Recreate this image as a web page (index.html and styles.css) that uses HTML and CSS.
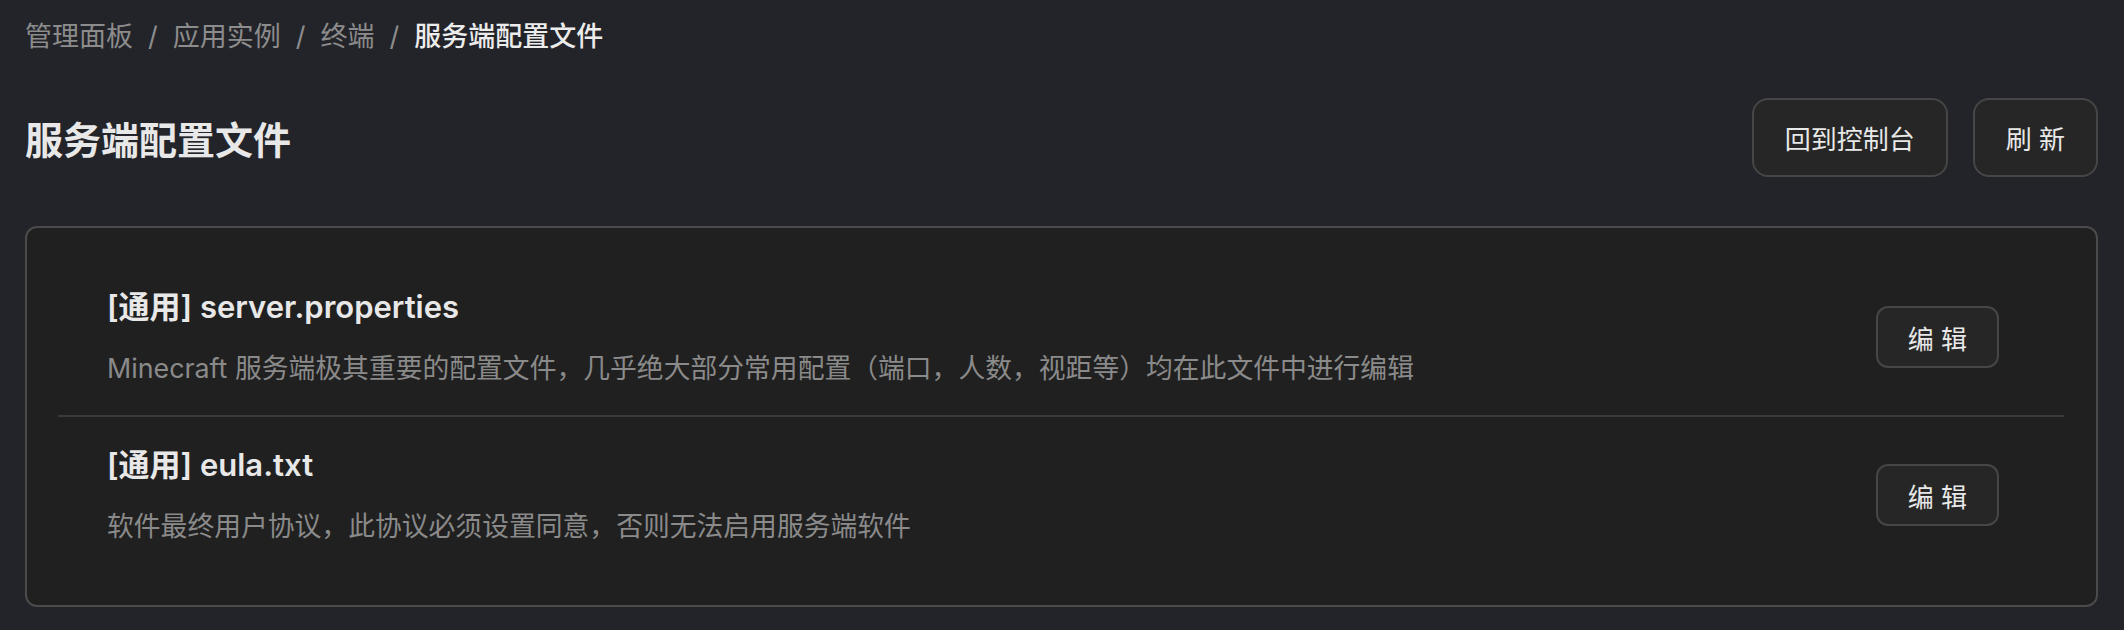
FILE: index.html
```html
<!DOCTYPE html>
<html lang="zh-CN">
<head>
    <meta charset="UTF-8">
    <meta name="viewport" content="width=device-width, initial-scale=1.0">
    <title>服务端配置文件</title>
    <link rel="stylesheet" href="styles.css">
</head>
<body>

    <!-- Breadcrumb -->
    <nav class="breadcrumb">
        <span class="crumb">管理面板</span>
        <span class="sep">/</span>
        <span class="crumb">应用实例</span>
        <span class="sep">/</span>
        <span class="crumb">终端</span>
        <span class="sep">/</span>
        <span class="crumb current">服务端配置文件</span>
    </nav>

    <!-- Page header -->
    <div class="page-header">
        <h1>服务端配置文件</h1>
        <div class="actions">
            <button class="btn">回到控制台</button>
            <button class="btn">刷 新</button>
        </div>
    </div>

    <!-- Config file list -->
    <div class="card">
        <ul class="file-list">
            <li class="file-item">
                <div class="file-info">
                    <h3>[通用] server.properties</h3>
                    <p>Minecraft 服务端极其重要的配置文件，几乎绝大部分常用配置（端口，人数，视距等）均在此文件中进行编辑</p>
                </div>
                <button class="btn btn-small">编 辑</button>
            </li>
            <li class="file-item">
                <div class="file-info">
                    <h3>[通用] eula.txt</h3>
                    <p>软件最终用户协议，此协议必须设置同意，否则无法启用服务端软件</p>
                </div>
                <button class="btn btn-small">编 辑</button>
            </li>
        </ul>
    </div>

</body>
</html>
```

FILE: styles.css
```css
* {
    margin: 0;
    padding: 0;
    box-sizing: border-box;
}

body {
    font-family: Inter, 'Noto Sans CJK SC', sans-serif;
    background-color: #232429;
    color: #e6e6e6;
    padding: 19px 26px 0 25px;
}

.breadcrumb {
    display: flex;
    align-items: center;
    font-size: 27px;
    line-height: 36px;
    color: #8c8c8c;
}

.breadcrumb .sep {
    margin: 0 15px;
}

.breadcrumb .current {
    color: #ececec;
    font-weight: 500;
}

.page-header {
    display: flex;
    align-items: center;
    justify-content: space-between;
    margin-top: 43px;
}

.page-header h1 {
    font-size: 38px;
    font-weight: 700;
    color: #e8e8e8;
}

.actions {
    display: flex;
    gap: 25px;
}

.btn {
    font-family: inherit;
    font-size: 26px;
    color: #e8e8e8;
    background-color: #262626;
    border: 2px solid #464646;
    border-radius: 16px;
    height: 79px;
    padding: 0 31px;
    cursor: pointer;
    box-shadow: 0 2px 0 rgba(0, 0, 0, 0.02);
}

.btn-small {
    height: 62px;
    padding: 0 30px;
    border-radius: 12px;
    flex-shrink: 0;
}

.card {
    margin-top: 49px;
    background-color: #202020;
    border: 2px solid #4b4b4b;
    border-radius: 12px;
    padding: 31px 32px 32px 31px;
}

.file-list {
    list-style: none;
}

.file-item {
    display: flex;
    align-items: center;
    justify-content: space-between;
    padding: 27px 65px 27px 49px;
    border-bottom: 2px solid #3a3a3a;
}

.file-item:last-child {
    border-bottom: none;
}

.file-info h3 {
    font-size: 31px;
    line-height: 42px;
    font-weight: 600;
    color: #e8e8e8;
}

.file-info p {
    margin-top: 20px;
    font-size: 26.8px;
    line-height: 40px;
    color: #8a8a8a;
}
```
